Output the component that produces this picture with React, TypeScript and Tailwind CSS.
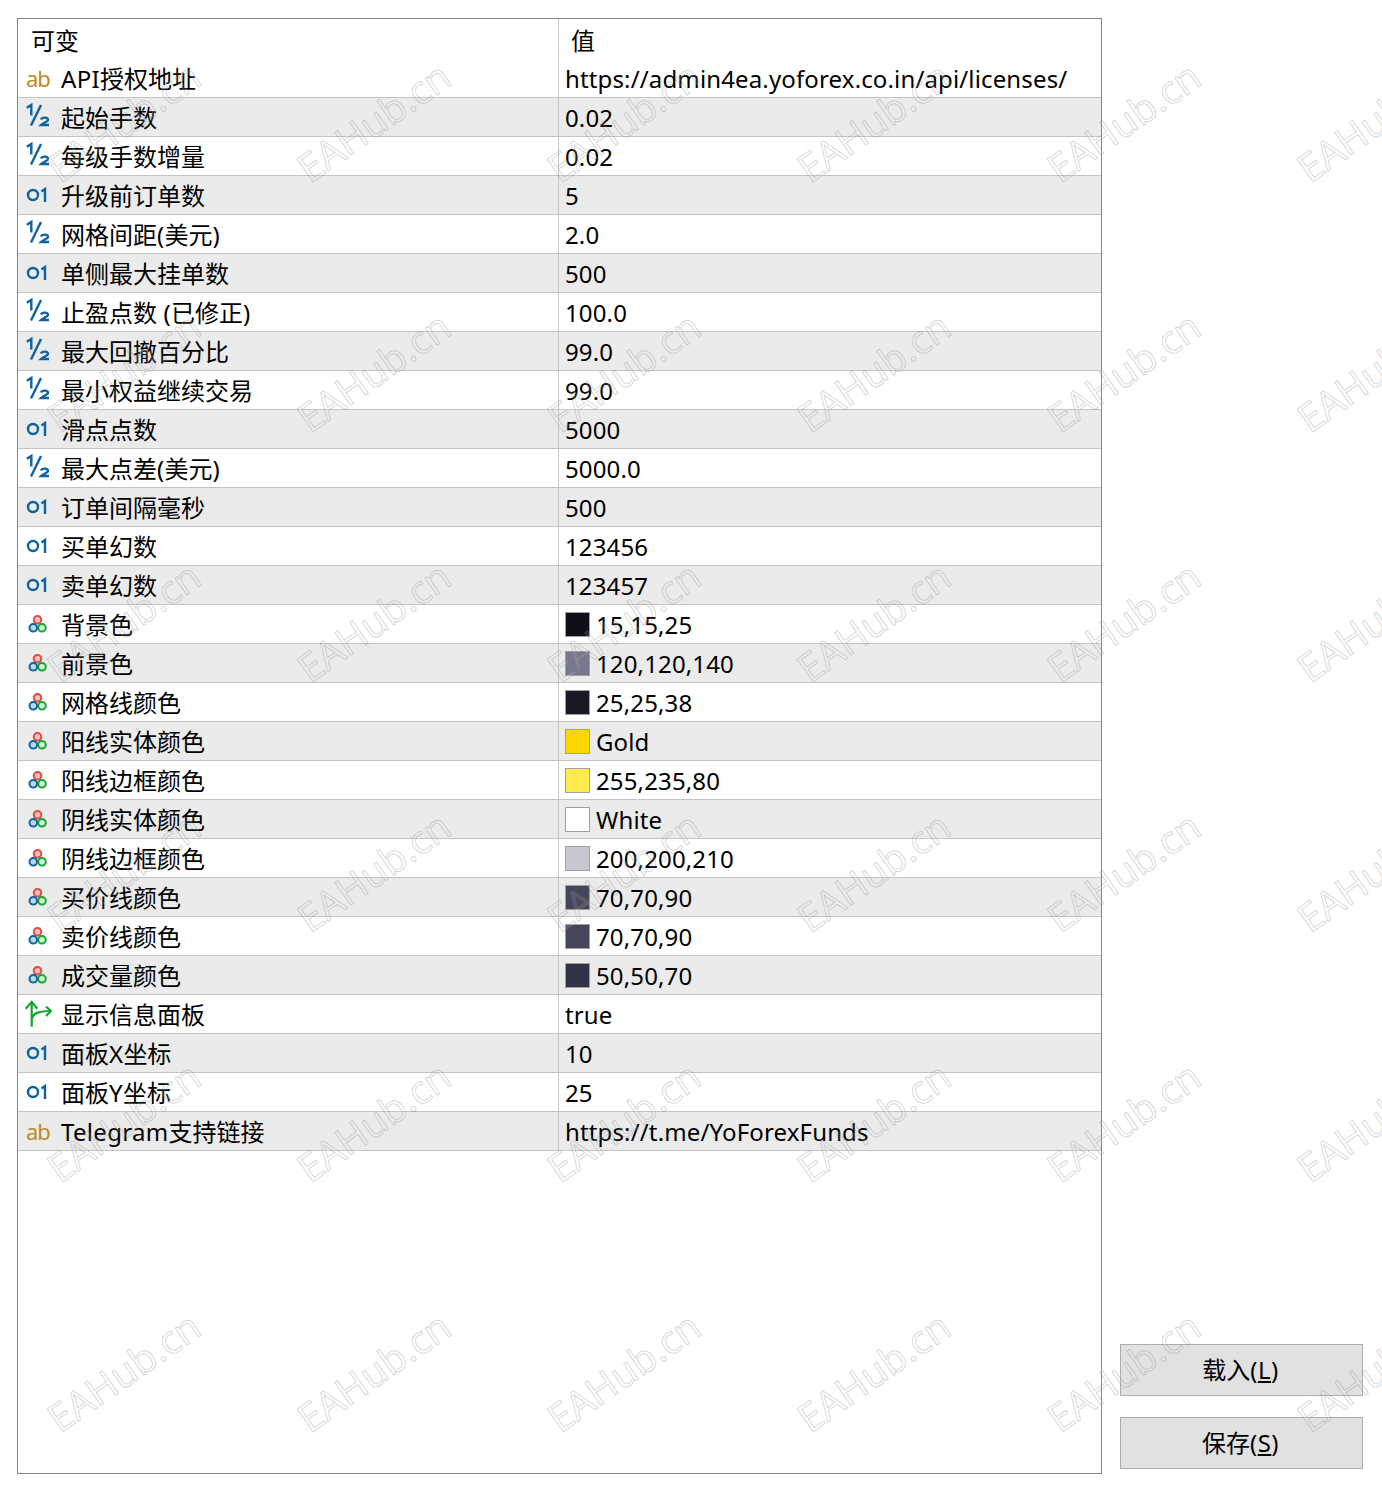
import type { ReactNode } from 'react';

/* ---------- data ---------- */

type Kind = 'ab' | 'half' | 'int' | 'color' | 'bool';

type Row = { kind: Kind; name: string; value: string; swatch?: string };

const ROWS: Row[] = [
  { kind: 'ab', name: 'API授权地址', value: 'https://admin4ea.yoforex.co.in/api/licenses/' },
  { kind: 'half', name: '起始手数', value: '0.02' },
  { kind: 'half', name: '每级手数增量', value: '0.02' },
  { kind: 'int', name: '升级前订单数', value: '5' },
  { kind: 'half', name: '网格间距(美元)', value: '2.0' },
  { kind: 'int', name: '单侧最大挂单数', value: '500' },
  { kind: 'half', name: '止盈点数 (已修正)', value: '100.0' },
  { kind: 'half', name: '最大回撤百分比', value: '99.0' },
  { kind: 'half', name: '最小权益继续交易', value: '99.0' },
  { kind: 'int', name: '滑点点数', value: '5000' },
  { kind: 'half', name: '最大点差(美元)', value: '5000.0' },
  { kind: 'int', name: '订单间隔毫秒', value: '500' },
  { kind: 'int', name: '买单幻数', value: '123456' },
  { kind: 'int', name: '卖单幻数', value: '123457' },
  { kind: 'color', name: '背景色', value: '15,15,25', swatch: 'bg-[#0f0f19]' },
  { kind: 'color', name: '前景色', value: '120,120,140', swatch: 'bg-[#78788c]' },
  { kind: 'color', name: '网格线颜色', value: '25,25,38', swatch: 'bg-[#191926]' },
  { kind: 'color', name: '阳线实体颜色', value: 'Gold', swatch: 'bg-[#ffd700]' },
  { kind: 'color', name: '阳线边框颜色', value: '255,235,80', swatch: 'bg-[#ffeb50]' },
  { kind: 'color', name: '阴线实体颜色', value: 'White', swatch: 'bg-white' },
  { kind: 'color', name: '阴线边框颜色', value: '200,200,210', swatch: 'bg-[#c8c8d2]' },
  { kind: 'color', name: '买价线颜色', value: '70,70,90', swatch: 'bg-[#46465a]' },
  { kind: 'color', name: '卖价线颜色', value: '70,70,90', swatch: 'bg-[#46465a]' },
  { kind: 'color', name: '成交量颜色', value: '50,50,70', swatch: 'bg-[#323246]' },
  { kind: 'bool', name: '显示信息面板', value: 'true' },
  { kind: 'int', name: '面板X坐标', value: '10' },
  { kind: 'int', name: '面板Y坐标', value: '25' },
  { kind: 'ab', name: 'Telegram支持链接', value: 'https://t.me/YoForexFunds' },
];

const MARK_X = [123, 373, 623, 873, 1123, 1373];
const MARK_Y = [121, 371, 621, 871, 1121, 1371];

/* ---------- icons ---------- */

function HalfIcon() {
  return (
    <svg width="26" height="30" viewBox="0 0 26 30" fill="none" stroke="#0f62a0" strokeWidth="2.4">
      <path d="M.8 5.8 5.3 3v10.5" />
      <path d="M15 3 5 23.5" />
      <path d="M15 17.5c1-2.6 7-2.6 7 .3 0 2.2-4.5 2.6-7 5.2h8" />
    </svg>
  );
}

function IntIcon() {
  return (
    <svg width="26" height="22" viewBox="0 0 26 22" fill="none" stroke="#0f62a0" strokeWidth="2.4">
      <circle cx="7" cy="11" r="5" />
      <path d="M15.5 7.5 19 5v13" />
    </svg>
  );
}

function ColorIcon() {
  return (
    <svg width="26" height="22" viewBox="0 0 26 22" strokeWidth="2">
      <circle cx="11.5" cy="6.8" r="3.8" fill="#f8c0bc" stroke="#e04a40" />
      <circle cx="16" cy="14.8" r="3.8" fill="#d8f0d8" stroke="#12a82e" />
      <circle cx="7.3" cy="14.8" r="3.8" fill="#b8d8f0" stroke="#0f62a0" />
    </svg>
  );
}

function BoolIcon() {
  return (
    <svg className="-ml-[2px]" width="28" height="28" viewBox="0 0 28 28" fill="none" stroke="#12a82e" strokeWidth="2.2">
      <path d="M7.7 26.7V2" />
      <path d="M1.7 8.7 7.7 2l5.6 6.7" />
      <path d="M7.7 19C9 13 15 11 26.7 11" />
      <path d="M22 6.7 27 11l-5 5" />
    </svg>
  );
}

function KindIcon({ kind }: { kind: Kind }) {
  if (kind === 'ab') return <span className="text-[22px] leading-none tracking-[-1px] text-[#c08a20]">ab</span>;
  if (kind === 'int') return <IntIcon />;
  if (kind === 'half') return <HalfIcon />;
  if (kind === 'color') return <ColorIcon />;
  return <BoolIcon />;
}

/* ---------- bits ---------- */

function Watermark({ x, y }: { x: number; y: number }) {
  return (
    <span
      className="absolute text-[39px] leading-none whitespace-nowrap text-white/10 [-webkit-text-stroke:1px_rgba(120,120,120,0.3)] font-['Open_Sans','Liberation_Sans',sans-serif]"
      style={{ left: x, top: y, transform: 'translate(-50%, -50%) rotate(-35deg)' }}
    >
      EAHub.cn
    </span>
  );
}

function Cell({ className, children }: { className: string; children: ReactNode }) {
  return <div className={`flex items-center min-w-0 ${className}`}>{children}</div>;
}

// latin runs sit slightly wider than the cjk ones in the name column
function RowName({ name }: { name: string }) {
  return (
    <span className="whitespace-nowrap pt-[2px]">
      {name.split(/([A-Za-z ()]+)/).map((part, i) =>
        i % 2 === 1 ? (
          <span key={i} className="tracking-[0.3px]">
            {part}
          </span>
        ) : (
          part
        ),
      )}
    </span>
  );
}

function PanelButton({ label, hot }: { label: string; hot: string }) {
  return (
    <button className="w-[243px] h-[52px] border border-[#adadad] bg-[#e1e1e1] text-[24px] text-black pr-[2px]">
      {label}
      <span className="tracking-[0.5px]">
        (<span className="underline">{hot}</span>)
      </span>
    </button>
  );
}

/* ---------- page ---------- */

export default function App() {
  return (
    <div className="relative w-[1382px] h-[1494px] overflow-hidden bg-white text-black font-['Noto_Sans','Noto_Sans_CJK_SC',sans-serif] text-[24px]">
      <div className="flex items-start pt-[18px] pl-[17px]">
        {/* ---- inputs table ---- */}
        <div className="w-[1085px] h-[1456px] border border-[#828790]">
          <div className="flex h-[40px]">
            <Cell className="w-[541px] pl-[13px] border-r border-[#c8c8c8]">
              <span className="pt-[4px]">可变</span>
            </Cell>
            <Cell className="flex-1 pl-[12px]">
              <span className="pt-[4px]">值</span>
            </Cell>
          </div>
          {ROWS.map((row, i) => (
            <div
              key={row.name}
              className={`flex h-[39px] border-b border-[#c4c4c4] ${i % 2 === 1 ? 'bg-[#ebebeb]' : 'bg-white'}`}
            >
              <Cell className="w-[541px] border-r border-[#c8c8c8]">
                <span className="flex w-[43px] pl-[8px] items-center shrink-0">
                  <KindIcon kind={row.kind} />
                </span>
                <RowName name={row.name} />
              </Cell>
              <Cell className="flex-1 pl-[6px] gap-[6px]">
                {row.swatch && <span className={`w-[25px] h-[25px] border border-[#a0a0a0] ${row.swatch}`} />}
                <span className="whitespace-nowrap pt-[2px] tracking-[0.14px]">{row.value}</span>
              </Cell>
            </div>
          ))}
        </div>

        {/* ---- load / save ---- */}
        <div className="flex flex-col gap-[21px] ml-[18px] mt-[1326px]">
          <PanelButton label="载入" hot="L" />
          <PanelButton label="保存" hot="S" />
        </div>
      </div>

      {/* ---- watermark overlay ---- */}
      <div className="absolute inset-0 pointer-events-none">
        {MARK_Y.map((y) => MARK_X.map((x) => <Watermark key={`${x}-${y}`} x={x} y={y} />))}
      </div>
    </div>
  );
}
